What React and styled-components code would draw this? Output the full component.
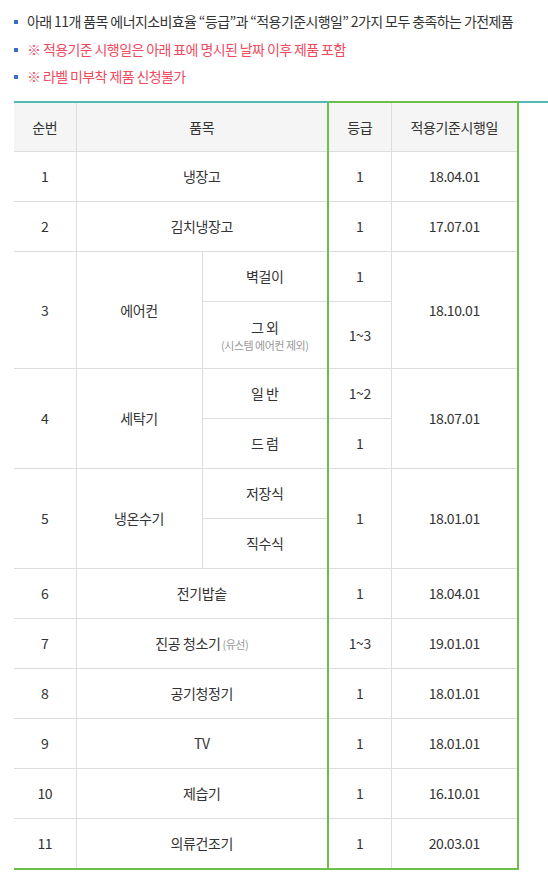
import styled, { createGlobalStyle } from "styled-components";

const GlobalStyle = createGlobalStyle`
  body {
    margin: 0;
    background: #ffffff;
    font-family: "Noto Sans CJK KR", "Noto Sans", sans-serif;
    color: #333333;
  }
`;

const Page = styled.div`
  padding: 8px 0 0 14px;
`;

const NoteList = styled.ul`
  list-style: none;
  margin: 0 0 10px;
  padding: 0;
`;

const Note = styled.li`
  position: relative;
  padding-left: 13px;
  font-size: 14px;
  line-height: 27.5px;
  letter-spacing: -0.6px;
  white-space: nowrap;
  color: ${(p) => (p.$warn ? "#ef4b5f" : "#333333")};

  &::before {
    content: "";
    position: absolute;
    left: 0;
    top: 12px;
    width: 4px;
    height: 4px;
    background: #3a6fc6;
  }
`;

const TableWrap = styled.div`
  border-top: 2px solid #52b9b5;
`;

const Table = styled.table`
  margin-top: -2px;
  border-collapse: collapse;
  table-layout: fixed;
  width: 504px;
  font-size: 14px;
  letter-spacing: -0.4px;
  color: #333333;
`;

const Head = styled.th`
  height: 48px;
  padding: 0;
  font-weight: 400;
  background: #f5f5f5;
  border-top: 2px solid ${(p) => (p.$box ? "#6cc04a" : "#52b9b5")};
  border-bottom: 1px solid #dddddd;
  border-left: ${(p) => (p.$left ? "2px solid #6cc04a" : p.$first ? "none" : "1px solid #dddddd")};
  border-right: ${(p) => (p.$right ? "2px solid #6cc04a" : "none")};
`;

const Cell = styled.td`
  height: ${(p) => p.$h || 49}px;
  padding: 0;
  text-align: center;
  line-height: 20px;
  border-top: 1px solid #dddddd;
  border-bottom: ${(p) => (p.$last ? "2px solid #6cc04a" : "1px solid #dddddd")};
  border-left: ${(p) => (p.$left ? "2px solid #6cc04a" : p.$first ? "none" : "1px solid #dddddd")};
  border-right: ${(p) => (p.$right ? "2px solid #6cc04a" : "none")};
`;

const Sub = styled.span`
  font-size: 11px;
  color: #999999;
  letter-spacing: -0.5px;
`;

const SubLine = styled.div`
  font-size: 11px;
  line-height: 16px;
  color: #999999;
  letter-spacing: -0.5px;
`;

const simpleRows = [
  { no: 6, name: "전기밥솥", grade: "1", date: "18.04.01" },
  { no: 7, name: "진공 청소기", sub: "(유선)", grade: "1~3", date: "19.01.01" },
  { no: 8, name: "공기청정기", grade: "1", date: "18.01.01" },
  { no: 9, name: "TV", grade: "1", date: "18.01.01" },
  { no: 10, name: "제습기", grade: "1", date: "16.10.01" },
  { no: 11, name: "의류건조기", grade: "1", date: "20.03.01", last: true },
];

export default function App() {
  return (
    <Page>
      <GlobalStyle />
      <NoteList>
        <Note>아래 11개 품목 에너지소비효율 “등급”과 “적용기준시행일” 2가지 모두 충족하는 가전제품</Note>
        <Note $warn>※ 적용기준 시행일은 아래 표에 명시된 날짜 이후 제품 포함</Note>
        <Note $warn>※ 라벨 미부착 제품 신청불가</Note>
      </NoteList>
      <TableWrap>
        <Table>
          <colgroup>
            <col style={{ width: 62 }} />
            <col style={{ width: 126 }} />
            <col style={{ width: 126 }} />
            <col style={{ width: 63 }} />
            <col style={{ width: 127 }} />
          </colgroup>
          <thead>
            <tr>
              <Head $first>순번</Head>
              <Head colSpan={2}>품목</Head>
              <Head $box $left>등급</Head>
              <Head $box $right>적용기준시행일</Head>
            </tr>
          </thead>
          <tbody>
            <tr>
              <Cell $first>1</Cell>
              <Cell colSpan={2}>냉장고</Cell>
              <Cell $left>1</Cell>
              <Cell $right>18.04.01</Cell>
            </tr>
            <tr>
              <Cell $first>2</Cell>
              <Cell colSpan={2}>김치냉장고</Cell>
              <Cell $left>1</Cell>
              <Cell $right>17.07.01</Cell>
            </tr>
            <tr>
              <Cell $first rowSpan={2}>3</Cell>
              <Cell rowSpan={2}>에어컨</Cell>
              <Cell>벽걸이</Cell>
              <Cell $left>1</Cell>
              <Cell $right rowSpan={2}>18.10.01</Cell>
            </tr>
            <tr>
              <Cell $h={66}>
                그 외
                <SubLine>(시스템 에어컨 제외)</SubLine>
              </Cell>
              <Cell $left>1~3</Cell>
            </tr>
            <tr>
              <Cell $first rowSpan={2}>4</Cell>
              <Cell rowSpan={2}>세탁기</Cell>
              <Cell>일 반</Cell>
              <Cell $left>1~2</Cell>
              <Cell $right rowSpan={2}>18.07.01</Cell>
            </tr>
            <tr>
              <Cell>드 럼</Cell>
              <Cell $left>1</Cell>
            </tr>
            <tr>
              <Cell $first rowSpan={2}>5</Cell>
              <Cell rowSpan={2}>냉온수기</Cell>
              <Cell>저장식</Cell>
              <Cell $left rowSpan={2}>1</Cell>
              <Cell $right rowSpan={2}>18.01.01</Cell>
            </tr>
            <tr>
              <Cell>직수식</Cell>
            </tr>
            {simpleRows.map((r) => (
              <tr key={r.no}>
                <Cell $first $last={r.last}>{r.no}</Cell>
                <Cell colSpan={2} $last={r.last}>
                  {r.name}
                  {r.sub && <Sub> {r.sub}</Sub>}
                </Cell>
                <Cell $left $last={r.last}>{r.grade}</Cell>
                <Cell $right $last={r.last}>{r.date}</Cell>
              </tr>
            ))}
          </tbody>
        </Table>
      </TableWrap>
    </Page>
  );
}
